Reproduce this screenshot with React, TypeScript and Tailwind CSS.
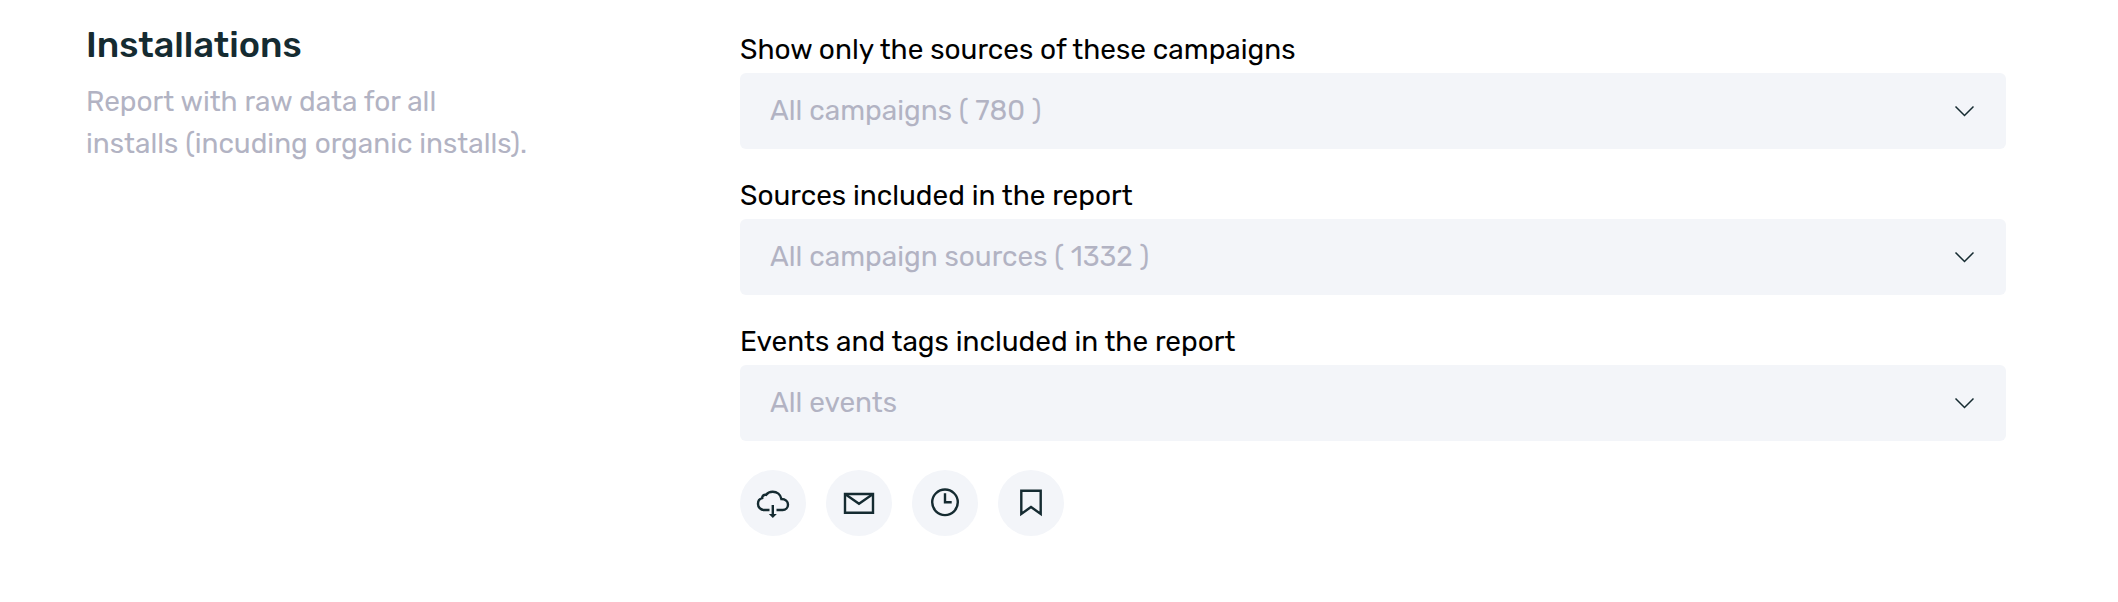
import type { ReactNode } from "react";

type Filter = { id: string; label: string; value: string };

const filters: Filter[] = [
  { id: "campaigns", label: "Show only the sources of these campaigns", value: "All campaigns ( 780 )" },
  { id: "sources", label: "Sources included in the report", value: "All campaign sources ( 1332 )" },
  { id: "events", label: "Events and tags included in the report", value: "All events" },
];

const actions: { label: string; icon: ReactNode }[] = [
  {
    label: "Download",
    icon: (
      <>
        <path d="M29.5 40H24a6 6 0 0 1-6-6.2c0-3 1.800-5 4.200-5.600-.2-2.200 1.600-3.900 4-3.400C27.600 22.800 30 21.800 32.700 21.800c4.300 0 7.900 2.800 8.700 7.200 4 .1 6.600 2.500 6.600 5.700 0 3.100-2.300 5.300-5.300 5.300H36.500" />
        <path d="M32.800 35v10" />
        <path d="M28.800 44h8l-4 4z" fill="currentColor" stroke="none" />
      </>
    ),
  },
  {
    label: "Send by email",
    icon: (
      <>
        <path d="M19 24h28v18.700H19z" />
        <path d="M19 24l14 9.700L47 24" />
      </>
    ),
  },
  {
    label: "Schedule",
    icon: (
      <>
        <circle cx="33" cy="32.300" r="12.800" />
        <path d="M33 23.300v9h6.700" />
      </>
    ),
  },
  {
    label: "Save",
    icon: <path d="M23.300 20.700h19.400v23.200L33 37l-9.700 6.900z" />,
  },
];

function FilterField({ id, label, value }: Filter) {
  return (
    <div className="flex flex-col">
      <label htmlFor={id} className="pb-0.5 text-[28px] leading-[42px] text-black">
        {label}
      </label>
      <div className="relative">
        <select
          id={id}
          className="block h-[76px] w-full appearance-none rounded-md bg-[#f3f5f9] pr-20 pl-[30px] text-[28px] text-[#b2b3c3]"
        >
          <option>{value}</option>
        </select>
        <svg
          viewBox="0 0 20 12"
          className="pointer-events-none absolute top-8 right-8 h-3 w-5 text-[#152b31]"
          fill="none"
          stroke="currentColor"
          strokeWidth="1.5"
          aria-hidden="true"
        >
          <path d="M1.500 1.500l9 9 9-9" />
        </svg>
      </div>
    </div>
  );
}

export default function App() {
  return (
    <main className="grid grid-cols-[327fr_633fr] bg-white pt-6 pr-28 pb-16 pl-[86px] font-[Rubik,Roboto,sans-serif]">
      <header className="pr-52">
        <h1 className="text-[36px] leading-[42px] font-medium text-[#152b31]">Installations</h1>
        <p className="pt-[15px] text-[28px] leading-[42px] text-[#b2b3c3]">
          Report with raw data for all
          <br />
          installs (incuding organic installs).
        </p>
      </header>
      <form className="flex flex-col gap-[26px] pt-[5px]">
        {filters.map((filter) => (
          <FilterField key={filter.id} {...filter} />
        ))}
        <div className="flex gap-5 pt-[3px]">
          {actions.map(({ label, icon }) => (
            <button
              key={label}
              type="button"
              aria-label={label}
              className="size-[66px] rounded-full bg-[#f3f5f9] text-[#152b31]"
            >
              <svg viewBox="0 0 66 66" fill="none" stroke="currentColor" strokeWidth="2.4" aria-hidden="true">
                {icon}
              </svg>
            </button>
          ))}
        </div>
      </form>
    </main>
  );
}
